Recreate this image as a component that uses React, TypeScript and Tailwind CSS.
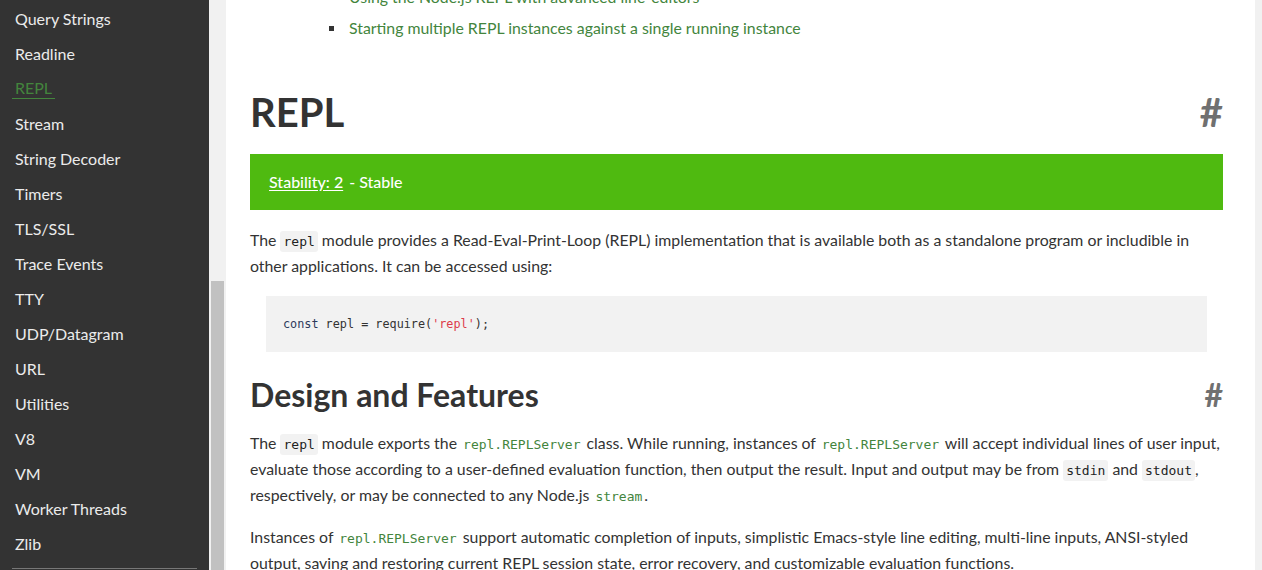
import React from 'react';

const navItems = [
  'Query Strings',
  'Readline',
  'REPL',
  'Stream',
  'String Decoder',
  'Timers',
  'TLS/SSL',
  'Trace Events',
  'TTY',
  'UDP/Datagram',
  'URL',
  'Utilities',
  'V8',
  'VM',
  'Worker Threads',
  'Zlib',
];

const lato = { fontFamily: 'Lato, "Open Sans", sans-serif' };

function Code({ children }: { children: React.ReactNode }) {
  return (
    <code className="rounded-[3px] bg-[#f2f2f2] px-[3px] py-[3px] font-['DejaVu_Sans_Mono',monospace] text-[13px] leading-none text-[#222]">
      {children}
    </code>
  );
}

function CodeLink({ children }: { children: React.ReactNode }) {
  return (
    <a className="px-[2px] font-['DejaVu_Sans_Mono',monospace] text-[13px] leading-none text-[#43853d]">{children}</a>
  );
}

export default function App() {
  return (
    <div className="flex h-[570px] overflow-hidden bg-white" style={lato}>
      <aside className="flex w-[209px] shrink-0 flex-col bg-[#333]">
        <ul className="pt-[1px]">
          {navItems.map((item) => (
            <li key={item} className="flex h-[35px] items-center pl-[12px]">
              {item === 'REPL' ? (
                <span className="border-b border-[#43853d] px-[3px] text-[16px] leading-[20px] text-[#43853d]">
                  {item}
                </span>
              ) : (
                <span className="px-[3px] text-[16px] leading-[20px] text-[#ebebeb]">{item}</span>
              )}
            </li>
          ))}
        </ul>
        <div className="mx-[12px] mt-[7px] border-t border-[#777]" />
      </aside>

      <div className="flex w-[17px] shrink-0 flex-col bg-[#f1f1f1]">
        <div className="ml-[2px] mt-[281px] w-[13px] flex-1 bg-[#c1c1c1]" />
      </div>

      <main className="min-w-0 flex-1 bg-white pl-[24px] pr-[32px] text-[15.85px] leading-[26px] text-[#333]">
        <ul className="-mt-[16px] space-y-[5px] pl-[79px]">
          {[
            'Using the Node.js REPL with advanced line-editors',
            'Starting multiple REPL instances against a single running instance',
          ].map((t) => (
            <li key={t} className="flex items-center gap-[15px]">
              <span className="h-[5px] w-[5px] bg-[#333]" />
              <a className="text-[#43853d]">{t}</a>
            </li>
          ))}
        </ul>

        <h1 className="mt-[47px] flex items-center justify-between text-[40px] leading-[48px] font-bold text-[#333]">
          <span>REPL</span>
          <span className="text-[#707070]">#</span>
        </h1>

        <div className="mt-[18px] flex h-[56px] items-center bg-[#4fba10] px-[19px] text-[16px] font-medium text-white">
          <a className="underline underline-offset-2">Stability: 2</a>
          <span className="ml-[6px]">- Stable</span>
        </div>

        <p className="mt-[17px]">
          The <Code>repl</Code> module provides a Read-Eval-Print-Loop (REPL) implementation that is available both as
          a standalone program or includible in other applications. It can be accessed using:
        </p>

        <pre className="mx-[16px] mt-[17px] flex h-[56px] items-center bg-[#f2f2f2] px-[17px] font-['DejaVu_Sans_Mono',monospace] text-[11.8px] text-[#333]">
          <span>
            <span className="text-[#2d3a5c]">const</span> repl = require(
            <span className="text-[#dd3b4a]">'repl'</span>);
          </span>
        </pre>

        <h2 className="mt-[23px] flex items-center justify-between text-[32px] leading-[40px] font-bold text-[#333]">
          <span>Design and Features</span>
          <span className="text-[#707070]">#</span>
        </h2>

        <p className="mt-[15px]">
          The <Code>repl</Code> module exports the <CodeLink>repl.REPLServer</CodeLink> class. While running,
          instances of <CodeLink>repl.REPLServer</CodeLink> will accept individual lines of user input, evaluate those
          according to a user-defined evaluation function, then output the result. Input and output may be from{' '}
          <Code>stdin</Code> and <Code>stdout</Code>, respectively, or may be connected to any Node.js{' '}
          <CodeLink>stream</CodeLink>.
        </p>

        <p className="mt-[16px]">
          Instances of <CodeLink>repl.REPLServer</CodeLink> support automatic completion of inputs, simplistic
          Emacs-style line editing, multi-line inputs, ANSI-styled output, saving and restoring current REPL session
          state, error recovery, and customizable evaluation functions.
        </p>
      </main>

      <div className="w-[7px] shrink-0 bg-[#f1f1f1]" />
    </div>
  );
}
